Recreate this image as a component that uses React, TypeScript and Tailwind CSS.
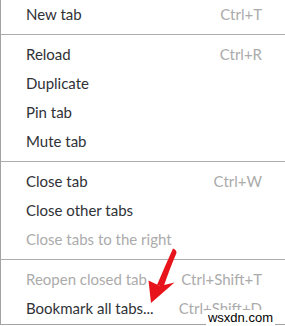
type Item = { label: string; shortcut?: string; disabled?: boolean } | 'sep';

const ITEMS: Item[] = [
  { label: 'New tab', shortcut: 'Ctrl+T' },
  'sep',
  { label: 'Reload', shortcut: 'Ctrl+R' },
  { label: 'Duplicate' },
  { label: 'Pin tab' },
  { label: 'Mute tab' },
  'sep',
  { label: 'Close tab', shortcut: 'Ctrl+W' },
  { label: 'Close other tabs' },
  { label: 'Close tabs to the right', disabled: true },
  'sep',
  { label: 'Reopen closed tab', shortcut: 'Ctrl+Shift+T', disabled: true },
  { label: 'Bookmark all tabs...', shortcut: 'Ctrl+Shift+D' },
];

function Arrow() {
  // hand-drawn red pointer arrow
  return (
    <svg className="absolute left-0 top-0" width="285" height="326" viewBox="0 0 285 326">
      <path d="M173 248.5 Q176.5 249.5 176.5 253 Q170 268 163.5 287 L157 285 Q165 266 173 248.5 Z" fill="#e8141b" />
      <path d="M151 303 L148.5 280.5 L160 286 L174.5 282.5 Z" fill="#e8141b" />
    </svg>
  );
}

export default function App() {
  return (
    <div className="relative w-[285px] h-[326px] bg-white overflow-hidden">
      <div
        className="flex flex-col h-[325px] border-l border-b border-[#a3a3a3] text-[15px]"
        style={{ fontFamily: 'Lato, "Noto Sans", sans-serif' }}
      >
        {ITEMS.map((it, i) =>
          it === 'sep' ? (
            <div key={i} className="my-[5px] h-px bg-[#adadad]" />
          ) : (
            <div key={i} className="flex h-[29px] items-center justify-between pl-[25px] pr-[23px]">
              <span className={it.disabled ? 'text-[#ababab]' : 'text-[#2f3237]'}>{it.label}</span>
              {it.shortcut && <span className="text-[#ababab]">{it.shortcut}</span>}
            </div>
          )
        )}
      </div>
      <Arrow />
      <div
        className="absolute right-[10px] bottom-[1px] bg-white px-[2px] text-[13px] leading-[15px] text-black"
        style={{ fontFamily: '"Liberation Sans", Arial, sans-serif' }}
      >
        wsxdn.com
      </div>
    </div>
  );
}
